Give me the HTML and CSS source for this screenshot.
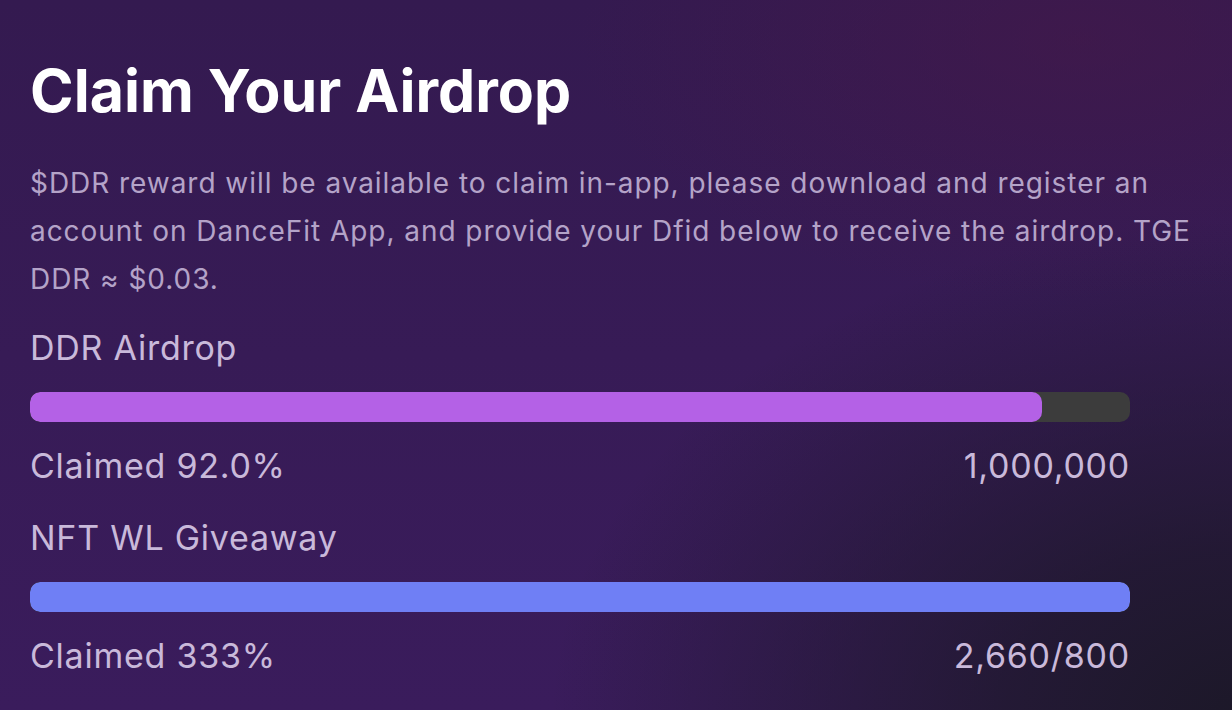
FILE: index.html
```html
<!DOCTYPE html>
<html lang="en">
<head>
    <meta charset="UTF-8">
    <meta name="viewport" content="width=device-width, initial-scale=1.0">
    <title>Claim Your Airdrop</title>
    <link rel="stylesheet" href="styles.css">
</head>
<body>
    <div class="airdrop">
        <h1>Claim Your Airdrop</h1>
        <p class="intro">$DDR reward will be available to claim in-app, please download and register an account on DanceFit App, and provide your Dfid below to receive the airdrop. TGE DDR ≈ $0.03.</p>

        <div class="pool">
            <div class="pool-name">DDR Airdrop</div>
            <div class="track">
                <div class="fill fill-ddr" style="width: 92%"></div>
            </div>
            <div class="pool-stats">
                <span>Claimed 92.0%</span>
                <span>1,000,000</span>
            </div>
        </div>

        <div class="pool">
            <div class="pool-name">NFT WL Giveaway</div>
            <div class="track">
                <div class="fill fill-nft" style="width: 100%"></div>
            </div>
            <div class="pool-stats">
                <span>Claimed 333%</span>
                <span>2,660/800</span>
            </div>
        </div>
    </div>
</body>
</html>
```

FILE: styles.css
```css
html, body {
    margin: 0;
    height: 100%;
}
body {
    font-family: Inter, "Noto Sans", sans-serif;
    color: #c4b6d6;
    background:
        radial-gradient(ellipse 700px 500px at 1250px 720px, rgba(28, 24, 40, 1) 0%, rgba(28, 24, 40, 0.75) 35%, rgba(28, 24, 40, 0) 100%),
        radial-gradient(ellipse 500px 260px at 1080px 40px, rgba(70, 24, 72, 0.55) 0%, rgba(70, 24, 72, 0) 100%),
        linear-gradient(to bottom, #341a50, #3a1c5c);
    overflow: hidden;
}
.airdrop {
    padding: 56px 30px 0 30px;
}
h1 {
    margin: 0;
    font-size: 59px;
    font-weight: 700;
    color: #ffffff;
    line-height: 70px;
}
.intro {
    margin: 33px 0 0 0;
    font-size: 28px;
    line-height: 48px;
    letter-spacing: 0.95px;
    color: #b4a3c8;
}
.pool {
    max-width: 1100px;
    margin-top: 21px;
}
.pool + .pool {
    margin-top: 24px;
}
.pool-name {
    font-size: 34px;
    line-height: 48px;
    letter-spacing: 0.75px;
    color: #c9b9da;
}
.track {
    margin-top: 20px;
    height: 30px;
    border-radius: 10px;
    background: #3c3c3c;
    overflow: hidden;
}
.fill {
    height: 100%;
    border-radius: 10px;
}
.fill-ddr {
    background: #b461e6;
}
.fill-nft {
    background: #6f7ff5;
}
.pool-stats {
    display: flex;
    justify-content: space-between;
    margin-top: 20px;
    font-size: 34px;
    line-height: 48px;
    letter-spacing: 0.75px;
    color: #c9b9da;
}
```
